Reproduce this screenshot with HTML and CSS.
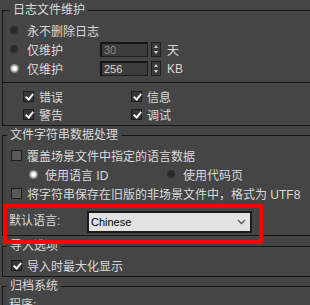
FILE: index.html
```html
<!DOCTYPE html>
<html lang="zh-CN">
<head>
    <meta charset="UTF-8">
    <meta name="viewport" content="width=device-width, initial-scale=1.0">
    <link rel="stylesheet" href="styles.css">
</head>
<body>
    <!-- Журнал -->
    <fieldset class="group group-log">
        <legend>日志文件维护</legend>
        <div class="log-opts">
            <div class="row"><span class="radio"></span><span class="lbl">永不删除日志</span></div>
            <div class="row">
                <span class="radio"></span><span class="lbl lbl-keep">仅维护</span>
                <span class="num num-off">30</span><span class="spin"></span><span class="unit">天</span>
            </div>
            <div class="row">
                <span class="radio on"></span><span class="lbl lbl-keep">仅维护</span>
                <span class="num">256</span><span class="spin"></span><span class="unit">KB</span>
            </div>
        </div>
        <div class="log-types">
            <div class="row"><span class="check on"></span><span class="lbl">错误</span></div>
            <div class="row"><span class="check on"></span><span class="lbl">信息</span></div>
            <div class="row"><span class="check on"></span><span class="lbl">警告</span></div>
            <div class="row"><span class="check on"></span><span class="lbl">调试</span></div>
        </div>
    </fieldset>

    <!-- Строки -->
    <fieldset class="group group-str">
        <legend>文件字符串数据处理</legend>
        <div class="row row-chk"><span class="check"></span><span class="lbl">覆盖场景文件中指定的语言数据</span></div>
        <div class="row row-src">
            <span class="src-item"><span class="radio on"></span><span class="lbl">使用语言 ID</span></span>
            <span class="src-item"><span class="radio"></span><span class="lbl">使用代码页</span></span>
        </div>
        <div class="row row-chk"><span class="check"></span><span class="lbl">将字符串保存在旧版的非场景文件中，格式为 UTF8</span></div>
        <div class="row row-lang">
            <span class="lang-lbl">默认语言:</span>
            <div class="dropdown">
                <span>Chinese</span>
                <svg width="9" height="6" viewBox="0 0 9 6"><polyline points="1,1 4.5,4.5 8,1" fill="none" stroke="#555" stroke-width="1.3"/></svg>
            </div>
        </div>
    </fieldset>

    <fieldset class="group group-imp">
        <legend>导入选项</legend>
        <div class="row row-chk"><span class="check on"></span><span class="lbl">导入时最大化显示</span></div>
    </fieldset>

    <fieldset class="group group-arc">
        <legend>归档系统</legend>
        <div class="row row-prog">程序:</div>
    </fieldset>

    <!-- Рамка-выделение поверх -->
    <div class="highlight"></div>
</body>
</html>
```

FILE: styles.css
```css
body {
    margin: 0;
    padding: 0;
    background-color: #454545;
    color: #dadada;
    font-family: "Liberation Sans", "Noto Sans CJK SC", sans-serif;
    font-size: 12px;
    position: relative;
    height: 305px;
    overflow: hidden;
}

.group {
    margin: 0 0 0 2px;
    padding: 0;
    border: 1px solid #171717;
    border-right: none;
    min-width: 0;
}

.group legend {
    margin-left: 4px;
    padding: 0 3px;
    height: 16px;
    line-height: 16px;
}

.row {
    display: flex;
    align-items: center;
    height: 19px;
}

.lbl {
    white-space: nowrap;
}

/* радио-кнопки */
.radio {
    width: 9px;
    height: 9px;
    border-radius: 50%;
    background: radial-gradient(circle at 40% 40%, #262626 0, #2e2e2e 50%, #5a5a5a 100%);
    flex-shrink: 0;
}

.radio.on {
    background: radial-gradient(circle at 50% 50%, #ffffff 0, #ffffff 28%, #b8b8b8 45%, #3a3a3a 100%);
}

/* флажки */
.check {
    width: 11px;
    height: 11px;
    box-sizing: border-box;
    border: 1px solid #1c1c1c;
    background-color: #5a5a5a;
    position: relative;
    flex-shrink: 0;
}

.check.on {
    background-color: #363636;
}

.check.on::after {
    content: "";
    position: absolute;
    left: 3px;
    top: 0px;
    width: 3px;
    height: 6px;
    border-right: 2px solid #f2f2f2;
    border-bottom: 2px solid #f2f2f2;
    transform: rotate(40deg);
}

/* группа 1 */
.group-log {
    margin-top: 2px;
}

.group-log legend {
    margin-left: 7px;
}

.log-opts {
    padding: 3px 0 4px 7px;
}

.log-opts .radio {
    margin-right: 8px;
}

.lbl-keep {
    width: 73px;
}

.num {
    width: 48px;
    height: 15px;
    box-sizing: border-box;
    border: 1px solid #1e1e1e;
    border-top: 2px solid #151515;
    border-left: 2px solid #151515;
    background-color: #3d3d3d;
    color: #d8d8d8;
    font-size: 11px;
    line-height: 12px;
    padding-left: 2px;
}

.num-off {
    color: #8a8a8a;
}

.spin {
    width: 10px;
    height: 15px;
    margin-left: 3px;
    box-sizing: border-box;
    border: 1px solid #1e1e1e;
    background-color: #3a3a3a;
    position: relative;
}

.spin::before,
.spin::after {
    content: "";
    position: absolute;
    left: 2px;
    border-left: 2px solid transparent;
    border-right: 2px solid transparent;
}

.spin::before {
    top: 2px;
    border-bottom: 3px solid #cfcfcf;
}

.spin::after {
    bottom: 2px;
    border-top: 3px solid #cfcfcf;
}

.unit {
    margin-left: 6px;
}

.log-types {
    border-top: 1px solid #171717;
    padding: 4px 0 2px 20px;
    display: grid;
    grid-template-columns: 108px 1fr;
}

.log-types .row {
    height: 18px;
}

.log-types .check {
    margin-right: 5px;
}

/* группа 2 */
.group-str {
    margin-top: 1px;
    padding-top: 3px;
}

.row-chk {
    padding-left: 8px;
}

.row-chk .check {
    margin-right: 5px;
}

.row-src {
    padding-left: 26px;
}

.src-item {
    display: flex;
    align-items: center;
}

.src-item:first-child {
    width: 138px;
}

.src-item .radio {
    margin-right: 7px;
}

.row-lang {
    height: 22px;
    margin-top: 8px;
    padding: 0 0 2px 6px;
}

.lang-lbl {
    width: 78px;
    margin-top: -6px;
}

.dropdown {
    width: 165px;
    height: 22px;
    box-sizing: border-box;
    border: 2px solid #1a1a1a;
    background-color: #e2e2e2;
    color: #000;
    font-family: "Liberation Sans", sans-serif;
    font-size: 11px;
    display: flex;
    align-items: center;
    justify-content: space-between;
    padding: 0 4px 0 2px;
}

/* группы 3, 4 */
.group-imp {
    margin-top: 2px;
    padding: 2px 0 1px;
}

.group-imp .row-chk {
    padding-left: 8px;
}

.group-arc {
    margin-top: 1px;
}

.row-prog {
    padding-left: 6px;
}

.highlight {
    position: absolute;
    left: 3px;
    top: 204px;
    width: 260px;
    height: 40px;
    box-sizing: border-box;
    border: 4px solid #ff0000;
}
```
